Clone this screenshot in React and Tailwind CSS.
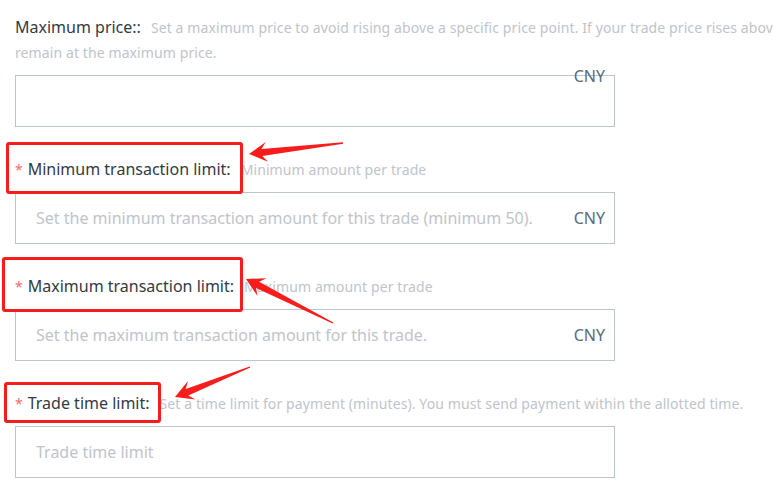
import React from "react";

const FONT = { fontFamily: '"Noto Sans", "Open Sans", Arial, sans-serif' };

// red annotation arrows: tip, tail
const ARROWS = [
  { tip: [249, 154], tail: [343, 143] },
  { tip: [246, 279], tail: [333, 323] },
  { tip: [175, 397], tail: [250, 367] },
];

function arrowPoints({ tip, tail }) {
  const [tx, ty] = tip;
  const [ex, ey] = tail;
  const len = Math.hypot(ex - tx, ey - ty);
  const ux = (ex - tx) / len;
  const uy = (ey - ty) / len;
  const nx = -uy;
  const ny = ux;
  const hl = 18; // head length
  const hw = 10; // half head width
  const sw = 3.5; // half shaft width at head
  const p = (a, b) => `${(tx + ux * a + nx * b).toFixed(1)},${(ty + uy * a + ny * b).toFixed(1)}`;
  return [
    p(0, 0),
    p(hl, hw),
    p(hl * 0.72, sw),
    p(len, 0.7),
    p(len, -0.7),
    p(hl * 0.72, -sw),
    p(hl, -hw),
  ].join(" ");
}

function Field({ label, required, hint, placeholder, unit, unitOnBorder, first }) {
  return (
    <div className={first ? "mt-[15px]" : "mt-[30px]"}>
      <div className="leading-[25px] mb-[10px] whitespace-nowrap">
        {required && <span className="text-[#f56c6c] text-[14px] mr-[5px]">*</span>}
        <span className="text-[16px] text-[#333a44]">{label}</span>
        <span className="text-[14px] text-[#c0c4cc] ml-[10px] tracking-[0.1px]">{hint}</span>
      </div>
      <div className="relative w-[600px] h-[52px] border border-[#b9c5d0] flex items-center bg-white">
        <input
          placeholder={placeholder}
          className="flex-1 h-full pl-5 text-[16px] outline-none bg-transparent placeholder:text-[#c0c4cc]"
          style={FONT}
        />
        {unit && !unitOnBorder && <span className="pr-[9px] text-[16px] text-[#5c6a79]">{unit}</span>}
        {unit && unitOnBorder && (
          <span className="absolute right-[9px] top-[-11px] text-[16px] text-[#5c6a79] leading-[22px]">{unit}</span>
        )}
      </div>
    </div>
  );
}

export default function App() {
  return (
    <div className="relative w-[773px] h-[485px] overflow-hidden bg-white" style={FONT}>
      <div className="pl-[15px]">
        <Field
          first
          label="Maximum price::"
          hint={
            <>
              Set a maximum price to avoid rising above a specific price point. If your trade price rises above it, it will
              <br />
              remain at the maximum price.
            </>
          }
          unit="CNY"
          unitOnBorder
        />
        <Field
          required
          label="Minimum transaction limit:"
          hint="Minimum amount per trade"
          placeholder="Set the minimum transaction amount for this trade (minimum 50)."
          unit="CNY"
        />
        <Field
          required
          label="Maximum transaction limit:"
          hint="Maximum amount per trade"
          placeholder="Set the maximum transaction amount for this trade."
          unit="CNY"
        />
        <Field
          required
          label="Trade time limit:"
          hint="Set a time limit for payment (minutes). You must send payment within the allotted time."
          placeholder="Trade time limit"
        />
      </div>

      {/* annotation boxes */}
      <div className="absolute left-[6px] top-[142px] w-[237px] h-[52px] border-[3px] border-[#f81d1d] rounded-[3px]" />
      <div className="absolute left-[2px] top-[257px] w-[241px] h-[55px] border-[3px] border-[#f81d1d] rounded-[3px]" />
      <div className="absolute left-[4px] top-[382px] w-[157px] h-[41px] border-[3px] border-[#f81d1d] rounded-[3px]" />

      <svg className="absolute inset-0 pointer-events-none" width="773" height="485">
        {ARROWS.map((a, i) => (
          <polygon key={i} points={arrowPoints(a)} fill="#f81d1d" />
        ))}
      </svg>
    </div>
  );
}
